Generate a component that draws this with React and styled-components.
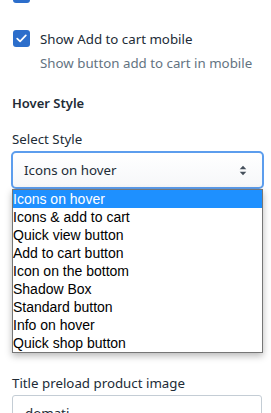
import React from 'react'
import styled, { createGlobalStyle } from 'styled-components'

const GlobalStyle = createGlobalStyle`
  html, body {
    margin: 0;
    padding: 0;
    background: #ffffff;
    overflow: hidden;
  }
  body {
    font-family: 'Noto Sans', 'Open Sans', sans-serif;
    font-size: 13.3px;
    color: #212b36;
  }
`

const styles = [
    'Icons on hover',
    'Icons & add to cart',
    'Quick view button',
    'Add to cart button',
    'Icon on the bottom',
    'Shadow Box',
    'Standard button',
    'Info on hover',
    'Quick shop button',
]

const Check = () => (
    <Box>
        <svg width='11' height='9' viewBox='0 0 11 9'>
            <path d='M1.2 4.6 L4.1 7.3 L9.8 1.4' fill='none' stroke='#fff' strokeWidth='1.7' strokeLinecap='round' strokeLinejoin='round' />
        </svg>
    </Box>
)

const App = () => {
    return (
        <Page>
            <GlobalStyle />
            <CheckRow $clip>
                <Check />
            </CheckRow>
            <CheckRow>
                <Check />
                <div>
                    <CheckLabel>Show Add to cart mobile</CheckLabel>
                    <HelpText>Show button add to cart in mobile</HelpText>
                </div>
            </CheckRow>

            <Heading>Hover Style</Heading>

            <Label>Select Style</Label>
            <SelectWrap>
                <Select>
                    <span>Icons on hover</span>
                    <svg width='8' height='11' viewBox='0 0 8 11'>
                        <path d='M4 0.8 L7.3 4.3 L0.7 4.3 Z' fill='#454f5b' />
                        <path d='M4 10.2 L7.3 6.7 L0.7 6.7 Z' fill='#454f5b' />
                    </svg>
                </Select>
                <Options>
                    {styles.map((s, i) => (
                        <Option key={s} $active={i === 0}>{s}</Option>
                    ))}
                </Options>
            </SelectWrap>

            <Label $gap>Title preload product image</Label>
            <Input>domati</Input>
        </Page>
    )
}

const Page = styled.div`
    width: 271px;
    height: 413px;
    box-sizing: border-box;
    padding: 0 9px 0 12px;
    overflow: hidden;
`
const CheckRow = styled.div`
    display: flex;
    align-items: flex-start;
    gap: 10px;
    padding-left: 1px;
    margin-top: ${p => p.$clip ? '-14px' : '27px'};
    height: ${p => p.$clip ? '17px' : 'auto'};
`
const Box = styled.div`
    flex: none;
    width: 17px;
    height: 17px;
    border-radius: 3px;
    background: #2c6ecb;
    display: flex;
    align-items: center;
    justify-content: center;
`
const CheckLabel = styled.div`
    line-height: 18px;
    white-space: nowrap;
    color: #212b36;
`
const HelpText = styled.div`
    margin-top: 6px;
    line-height: 18px;
    white-space: nowrap;
    color: #637381;
`
const Heading = styled.div`
    margin-top: 22px;
    line-height: 18px;
    font-weight: 600;
    font-size: 13px;
`
const Label = styled.div`
    margin-top: ${p => p.$gap ? '185px' : '18px'};
    line-height: 18px;
    white-space: nowrap;
`
const SelectWrap = styled.div`
    position: relative;
    margin-top: 3px;
    margin-left: -1px;
    width: 253px;
`
const Select = styled.div`
    box-sizing: border-box;
    height: 38px;
    border: 2px solid #5c9ded;
    border-radius: 5px;
    background: linear-gradient(#ffffff, #f6f7f9);
    box-shadow: 0 1px 0 rgba(22, 29, 37, 0.05);
    display: flex;
    align-items: center;
    justify-content: space-between;
    padding: 0 15px 0 11px;
    color: #212b36;
`
const Options = styled.div`
    position: absolute;
    top: 38px;
    left: 1px;
    width: 251px;
    box-sizing: border-box;
    border: 1px solid #767676;
    background: #fff;
    box-shadow: 0 3px 7px rgba(0, 0, 0, 0.28);
    font-family: 'Liberation Sans', Arial, sans-serif;
    font-size: 14px;
    color: #000;
`
const Option = styled.div`
    height: 18px;
    line-height: 18px;
    white-space: nowrap;
    background: ${p => p.$active ? '#1e90ff' : 'transparent'};
    color: ${p => p.$active ? '#fff' : '#000'};
`
const Input = styled.div`
    margin-top: 3px;
    width: 250px;
    height: 36px;
    box-sizing: border-box;
    border: 1px solid #c4cdd5;
    border-radius: 3px;
    padding: 0 12px;
    line-height: 34px;
    color: #212b36;
`

export default App
